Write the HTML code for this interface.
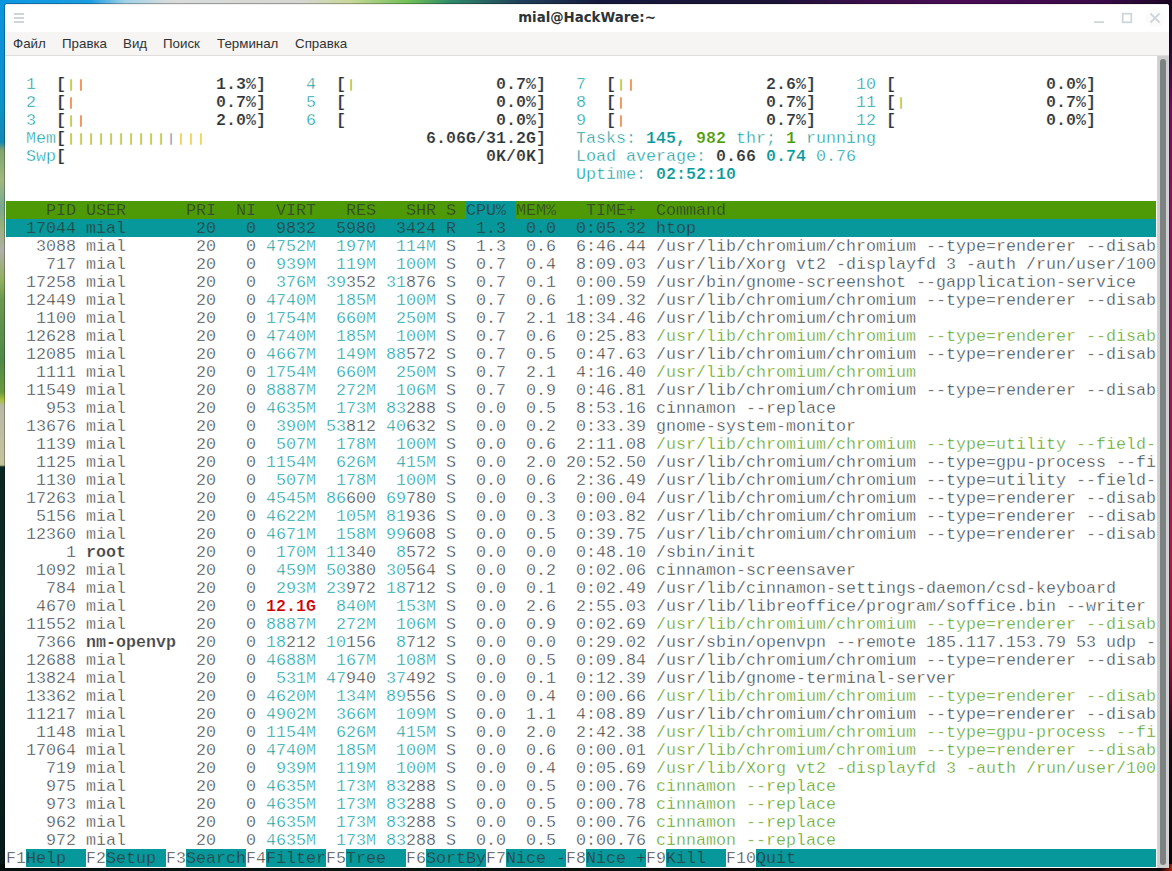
<!DOCTYPE html>
<html lang="ru">
<head>
<meta charset="utf-8">
<title>mial@HackWare:~</title>
<style>
html,body{margin:0;padding:0;}
body{width:1172px;height:871px;overflow:hidden;position:relative;background:#0b0f12;font-family:"DejaVu Sans","Liberation Sans",sans-serif;}
#wp-top{position:absolute;left:0;top:0;width:1172px;height:6px;background:linear-gradient(90deg,#0c98e4 0px,#1c9ce0 90px,#9fd3e6 125px,#d9dcdc 170px,#d6d6d2 300px,#c9d89a 350px,#6fbf55 410px,#2f8a6a 450px,#20405a 520px,#161a3c 600px,#1c1238 780px,#3a0f4a 860px,#4a0c55 960px,#3a0a48 1100px,#1c0626 1172px);}
#wp-left{position:absolute;left:0;top:0;width:7px;height:871px;background:linear-gradient(180deg,#0c96e0 0px,#0c90d4 60px,#0c94c8 100px,#1488b4 142px,#80a470 150px,#a0b880 180px,#78a890 207px,#98b078 225px,#b0b0a8 250px,#90b060 280px,#6a9850 300px,#508848 360px,#6a9a40 392px,#a8c040 400px,#b8b8a8 406px,#c4c49c 465px,#0a2622 467px,#0c2c28 600px,#061a18 871px);}
#wp-right{position:absolute;left:1166px;top:0;width:6px;height:871px;background:linear-gradient(180deg,#1a0622 0px,#2a0834 50px,#780860 110px,#901060 200px,#a01858 480px,#b01848 560px,#a01040 640px,#600828 700px,#200610 740px,#100408 871px);}
#wp-bottom{position:absolute;left:0;top:864px;width:1172px;height:7px;background:radial-gradient(circle at 1174px 4px,#d83008 0px,#8a1808 5px,rgba(40,8,6,0) 14px),linear-gradient(90deg,#06100e 0px,#0a1412 400px,#0c0808 800px,#100606 1172px);}
#win{position:absolute;left:5px;top:4px;width:1164px;height:864px;background:#fff;border-radius:3px 3px 0 0;overflow:hidden;box-shadow:0 0 0 1px rgba(0,0,0,.28);}
#title{position:absolute;left:0;top:0;width:1164px;height:28px;background:#fff;box-shadow:inset 0 1px 0 #f1f0ef;}
#title .t{position:absolute;left:0;width:1164px;top:6px;text-align:center;font:bold 13.33px/16px "DejaVu Sans","Liberation Sans",sans-serif;color:#2e3436;}
#menu{position:absolute;left:0;top:28px;width:1164px;height:23px;background:#f6f5f4;border-bottom:1px solid #dedddc;}
#menu span{position:absolute;top:4px;font:13.33px/16px "Liberation Sans","DejaVu Sans",sans-serif;color:#2e3436;white-space:nowrap;}
#term{position:absolute;left:0;top:52px;width:1152px;height:812px;background:#fff;}
#scr{position:absolute;left:1152px;top:52px;width:12px;height:812px;background:#cfcfcf;box-sizing:border-box;border-left:1px solid #d4d4d4;border-right:1px solid #d3d8d6;}
#scr i{position:absolute;left:2px;top:3px;width:6px;height:806px;border-radius:3px;background:#7c8182;}
#rows{position:absolute;left:1px;top:1px;width:1150px;}
.r{height:18px;line-height:20px;-webkit-text-stroke:0.4px #fff;white-space:pre;font-family:"Liberation Mono","DejaVu Sans Mono",monospace;font-size:16.6667px;letter-spacing:0.0045px;color:#2e3436;overflow:hidden;}
.r b{font-weight:bold;-webkit-text-stroke-width:0.2px;}
.r i{font-style:normal;display:inline-block;height:18px;vertical-align:top;transform:scaleY(.788);transform-origin:50% 7.5px;}
.hdr{background:#4e9a06;-webkit-text-stroke-color:#4e9a06;}
.hs{background:#06989a;-webkit-text-stroke-color:#06989a;display:inline-block;height:18px;vertical-align:top;}
.sel{background:#06989a;-webkit-text-stroke-color:#06989a;}
.fk{background:#06989a;-webkit-text-stroke-color:#06989a;display:inline-block;height:18px;vertical-align:top;}
.c{color:#06989a;}
.gr{color:#4e9a06;}
.rd{color:#cc0000;}
.sh{color:#444;}
.g{color:#4e9a06;}
.rr{color:#cc0000;}
.bl{color:#3465a4;}
.y{color:#c4a000;}
</style>
</head>
<body>
<div id="wp-top"></div><div id="wp-left"></div><div id="wp-right"></div><div id="wp-bottom"></div>
<div id="win">
 <div id="title">
  <svg style="position:absolute;left:8px;top:8px" width="12" height="12" viewBox="0 0 12 12"><path d="M1 2h10M1 6h10M1 10h10" stroke="#ced6db" stroke-width="2" fill="none"/></svg>
  <div class="t">mial@HackWare:~</div>
  <svg style="position:absolute;left:1086px;top:6px;overflow:visible" width="72" height="16" viewBox="0 0 72 16"><circle cx="64" cy="8" r="9.5" fill="#fbfbfb"/><g stroke="#cdd6db" stroke-width="1.8" fill="none"><path d="M3 12.1h10"/><rect x="31.7" y="3.7" width="8.6" height="8.6"/><path d="M59.5 3.5l9 9M68.5 3.5l-9 9"/></g></svg>
 </div>
 <div id="menu"><span style="left:8px">Файл</span><span style="left:57px">Правка</span><span style="left:118px">Вид</span><span style="left:158px">Поиск</span><span style="left:212px">Терминал</span><span style="left:290px">Справка</span></div>
 <div id="term"><div id="rows">
<div class="r"> </div>
<div class="r">  <span class="c">1  </span><b>[</b><i class="g">|</i><i class="rr">|</i>             <b>1.3%]</b>    <span class="c">4  </span><b>[</b><i class="g">|</i>              <b>0.7%]</b>   <span class="c">7  </span><b>[</b><i class="g">|</i><i class="rr">|</i>             <b>2.6%]</b>    <span class="c">10 </span><b>[</b>               <b>0.0%]</b></div>
<div class="r">  <span class="c">2  </span><b>[</b><i class="rr">|</i>              <b>0.7%]</b>    <span class="c">5  </span><b>[</b>               <b>0.0%]</b>   <span class="c">8  </span><b>[</b><i class="rr">|</i>              <b>0.7%]</b>    <span class="c">11 </span><b>[</b><i class="g">|</i>              <b>0.7%]</b></div>
<div class="r">  <span class="c">3  </span><b>[</b><i class="g">|</i><i class="rr">|</i>             <b>2.0%]</b>    <span class="c">6  </span><b>[</b>               <b>0.0%]</b>   <span class="c">9  </span><b>[</b><i class="rr">|</i>              <b>0.7%]</b>    <span class="c">12 </span><b>[</b>               <b>0.0%]</b></div>
<div class="r">  <span class="c">Mem</span><b>[</b><i class="g">|</i><i class="g">|</i><i class="g">|</i><i class="g">|</i><i class="g">|</i><i class="g">|</i><i class="g">|</i><i class="g">|</i><i class="g">|</i><i class="g">|</i><i class="bl">|</i><i class="y">|</i><i class="y">|</i><i class="y">|</i>                      <b>6.06G/31.2G]</b>   <span class="c">Tasks: </span><b class="c">145,</b> <b class="gr">982</b><span class="c"> thr; </span><b class="gr">1</b><span class="c"> running</span></div>
<div class="r">  <span class="c">Swp</span><b>[</b>                                          <b>0K/0K]</b>   <span class="c">Load average: </span><b>0.66 </b><b class="c">0.74 </b><span class="c">0.76</span></div>
<div class="r">                                                         <span class="c">Uptime: </span><b class="c">02:52:10</b></div>
<div class="r"> </div>
<div class="r hdr">    PID USER      PRI  NI  VIRT   RES   SHR S <span class="hs">CPU% </span>MEM%   TIME+  Command</div>
<div class="r sel">  17044 mial       20   0  9832  5980  3424 R  1.3  0.0  0:05.32 htop</div>
<div class="r">   3088 mial       20   0 <span class="c">4752M</span>  <span class="c">197M</span>  <span class="c">114M</span> S  1.3  0.6  6:46.44 /usr/lib/chromium/chromium --type=renderer --disab</div>
<div class="r">    717 mial       20   0  <span class="c">939M</span>  <span class="c">119M</span>  <span class="c">100M</span> S  0.7  0.4  8:09.03 /usr/lib/Xorg vt2 -displayfd 3 -auth /run/user/100</div>
<div class="r">  17258 mial       20   0  <span class="c">376M</span> <span class="c">39</span>352 <span class="c">31</span>876 S  0.7  0.1  0:00.59 /usr/bin/gnome-screenshot --gapplication-service</div>
<div class="r">  12449 mial       20   0 <span class="c">4740M</span>  <span class="c">185M</span>  <span class="c">100M</span> S  0.7  0.6  1:09.32 /usr/lib/chromium/chromium --type=renderer --disab</div>
<div class="r">   1100 mial       20   0 <span class="c">1754M</span>  <span class="c">660M</span>  <span class="c">250M</span> S  0.7  2.1 18:34.46 /usr/lib/chromium/chromium</div>
<div class="r">  12628 mial       20   0 <span class="c">4740M</span>  <span class="c">185M</span>  <span class="c">100M</span> S  0.7  0.6  0:25.83 <span class="gr">/usr/lib/chromium/chromium --type=renderer --disab</span></div>
<div class="r">  12085 mial       20   0 <span class="c">4667M</span>  <span class="c">149M</span> <span class="c">88</span>572 S  0.7  0.5  0:47.63 /usr/lib/chromium/chromium --type=renderer --disab</div>
<div class="r">   1111 mial       20   0 <span class="c">1754M</span>  <span class="c">660M</span>  <span class="c">250M</span> S  0.7  2.1  4:16.40 <span class="gr">/usr/lib/chromium/chromium</span></div>
<div class="r">  11549 mial       20   0 <span class="c">8887M</span>  <span class="c">272M</span>  <span class="c">106M</span> S  0.7  0.9  0:46.81 /usr/lib/chromium/chromium --type=renderer --disab</div>
<div class="r">    953 mial       20   0 <span class="c">4635M</span>  <span class="c">173M</span> <span class="c">83</span>288 S  0.0  0.5  8:53.16 cinnamon --replace</div>
<div class="r">  13676 mial       20   0  <span class="c">390M</span> <span class="c">53</span>812 <span class="c">40</span>632 S  0.0  0.2  0:33.39 gnome-system-monitor</div>
<div class="r">   1139 mial       20   0  <span class="c">507M</span>  <span class="c">178M</span>  <span class="c">100M</span> S  0.0  0.6  2:11.08 <span class="gr">/usr/lib/chromium/chromium --type=utility --field-</span></div>
<div class="r">   1125 mial       20   0 <span class="c">1154M</span>  <span class="c">626M</span>  <span class="c">415M</span> S  0.0  2.0 20:52.50 /usr/lib/chromium/chromium --type=gpu-process --fi</div>
<div class="r">   1130 mial       20   0  <span class="c">507M</span>  <span class="c">178M</span>  <span class="c">100M</span> S  0.0  0.6  2:36.49 /usr/lib/chromium/chromium --type=utility --field-</div>
<div class="r">  17263 mial       20   0 <span class="c">4545M</span> <span class="c">86</span>600 <span class="c">69</span>780 S  0.0  0.3  0:00.04 /usr/lib/chromium/chromium --type=renderer --disab</div>
<div class="r">   5156 mial       20   0 <span class="c">4622M</span>  <span class="c">105M</span> <span class="c">81</span>936 S  0.0  0.3  0:03.82 /usr/lib/chromium/chromium --type=renderer --disab</div>
<div class="r">  12360 mial       20   0 <span class="c">4671M</span>  <span class="c">158M</span> <span class="c">99</span>608 S  0.0  0.5  0:39.75 /usr/lib/chromium/chromium --type=renderer --disab</div>
<div class="r">      1 <b class="sh">root     </b>  20   0  <span class="c">170M</span> <span class="c">11</span>340  <span class="c">8</span>572 S  0.0  0.0  0:48.10 /sbin/init</div>
<div class="r">   1092 mial       20   0  <span class="c">459M</span> <span class="c">50</span>380 <span class="c">30</span>564 S  0.0  0.2  0:02.06 cinnamon-screensaver</div>
<div class="r">    784 mial       20   0  <span class="c">293M</span> <span class="c">23</span>972 <span class="c">18</span>712 S  0.0  0.1  0:02.49 /usr/lib/cinnamon-settings-daemon/csd-keyboard</div>
<div class="r">   4670 mial       20   0 <b class="rd">12.1G</b>  <span class="c">840M</span>  <span class="c">153M</span> S  0.0  2.6  2:55.03 /usr/lib/libreoffice/program/soffice.bin --writer</div>
<div class="r">  11552 mial       20   0 <span class="c">8887M</span>  <span class="c">272M</span>  <span class="c">106M</span> S  0.0  0.9  0:02.69 <span class="gr">/usr/lib/chromium/chromium --type=renderer --disab</span></div>
<div class="r">   7366 <b class="sh">nm-openvp</b>  20   0 <span class="c">18</span>212 <span class="c">10</span>156  <span class="c">8</span>712 S  0.0  0.0  0:29.02 /usr/sbin/openvpn --remote 185.117.153.79 53 udp -</div>
<div class="r">  12688 mial       20   0 <span class="c">4688M</span>  <span class="c">167M</span>  <span class="c">108M</span> S  0.0  0.5  0:09.84 /usr/lib/chromium/chromium --type=renderer --disab</div>
<div class="r">  13824 mial       20   0  <span class="c">531M</span> <span class="c">47</span>940 <span class="c">37</span>492 S  0.0  0.1  0:12.39 /usr/lib/gnome-terminal-server</div>
<div class="r">  13362 mial       20   0 <span class="c">4620M</span>  <span class="c">134M</span> <span class="c">89</span>556 S  0.0  0.4  0:00.66 <span class="gr">/usr/lib/chromium/chromium --type=renderer --disab</span></div>
<div class="r">  11217 mial       20   0 <span class="c">4902M</span>  <span class="c">366M</span>  <span class="c">109M</span> S  0.0  1.1  4:08.89 /usr/lib/chromium/chromium --type=renderer --disab</div>
<div class="r">   1148 mial       20   0 <span class="c">1154M</span>  <span class="c">626M</span>  <span class="c">415M</span> S  0.0  2.0  2:42.38 <span class="gr">/usr/lib/chromium/chromium --type=gpu-process --fi</span></div>
<div class="r">  17064 mial       20   0 <span class="c">4740M</span>  <span class="c">185M</span>  <span class="c">100M</span> S  0.0  0.6  0:00.01 <span class="gr">/usr/lib/chromium/chromium --type=renderer --disab</span></div>
<div class="r">    719 mial       20   0  <span class="c">939M</span>  <span class="c">119M</span>  <span class="c">100M</span> S  0.0  0.4  0:05.69 <span class="gr">/usr/lib/Xorg vt2 -displayfd 3 -auth /run/user/100</span></div>
<div class="r">    975 mial       20   0 <span class="c">4635M</span>  <span class="c">173M</span> <span class="c">83</span>288 S  0.0  0.5  0:00.76 <span class="gr">cinnamon --replace</span></div>
<div class="r">    973 mial       20   0 <span class="c">4635M</span>  <span class="c">173M</span> <span class="c">83</span>288 S  0.0  0.5  0:00.78 <span class="gr">cinnamon --replace</span></div>
<div class="r">    962 mial       20   0 <span class="c">4635M</span>  <span class="c">173M</span> <span class="c">83</span>288 S  0.0  0.5  0:00.76 <span class="gr">cinnamon --replace</span></div>
<div class="r">    972 mial       20   0 <span class="c">4635M</span>  <span class="c">173M</span> <span class="c">83</span>288 S  0.0  0.5  0:00.76 <span class="gr">cinnamon --replace</span></div>
<div class="r">F1<span class="fk">Help  </span>F2<span class="fk">Setup </span>F3<span class="fk">Search</span>F4<span class="fk">Filter</span>F5<span class="fk">Tree  </span>F6<span class="fk">SortBy</span>F7<span class="fk">Nice -</span>F8<span class="fk">Nice +</span>F9<span class="fk">Kill  </span>F10<span class="fk">Quit                                    </span></div>
 </div></div>
 <div id="scr"><i></i></div>
</div>
</body>
</html>
